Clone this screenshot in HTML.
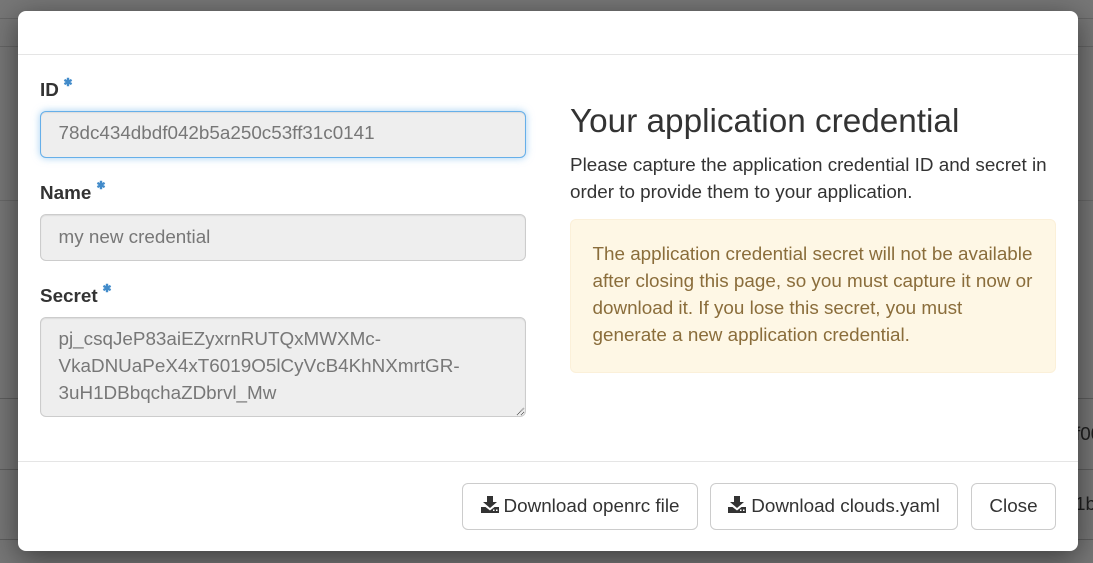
<!DOCTYPE html>
<html><head><meta charset="utf-8">
<style>
html,body{margin:0;padding:0;width:1093px;height:563px;overflow:hidden;background:#777;font-family:"Liberation Sans",sans-serif;font-size:18.85px;color:#333;}
.a{position:absolute;white-space:nowrap;}
.bgl{position:absolute;left:0;width:1093px;height:1px;background:#5e5e5e;}
.modal{position:absolute;left:18px;top:11px;width:1060px;height:540px;background:#fff;border-radius:8px;box-shadow:0 7px 30px rgba(0,0,0,.5);}
.hr{position:absolute;left:18px;width:1060px;height:1px;background:#e5e5e5;}
.lab{position:absolute;left:40px;font-weight:bold;line-height:27px;white-space:nowrap;}
.star{position:absolute;width:10px;height:10px;}
.inp{position:absolute;left:40px;width:486px;box-sizing:border-box;background:#eee;border:1px solid #ccc;border-radius:6px;color:#777;padding:7px 17.5px;line-height:27px;box-shadow:inset 0 1px 1px rgba(0,0,0,.075);white-space:nowrap;}
.btn{position:absolute;top:483px;height:47px;box-sizing:border-box;background:#fff;border:1px solid #ccc;border-radius:6px;line-height:43px;text-align:center;white-space:nowrap;}
.btn svg{vertical-align:-1px;margin-right:5px;}
</style></head>
<body>
<div class="bgl" style="top:18px;background:#666"></div>
<div class="bgl" style="top:46px;background:#666"></div>
<div class="bgl" style="top:200px;background:#696969"></div>
<div class="bgl" style="top:398px"></div>
<div class="bgl" style="top:469px"></div>
<div class="bgl" style="top:539px"></div>
<div class="a" style="left:1075px;top:420px;color:#1e1e1e;line-height:27px">f00</div>
<div class="a" style="left:1075px;top:490px;color:#1e1e1e;line-height:27px">1b</div>
<div class="modal"></div>
<div class="hr" style="top:54px"></div>
<div class="hr" style="top:461px"></div>

<div class="lab" style="top:76px">ID</div>
<svg class="star" style="left:63px;top:77px" viewBox="0 0 10 10"><path d="M5 .8v8.400M1.400 2.900l7.200 4.200M8.600 2.900l-7.200 4.200" stroke="#428bca" stroke-width="2.400" fill="none"/></svg>
<div class="inp" style="top:111px;height:47px;border-color:#66afe9;box-shadow:inset 0 1px 1px rgba(0,0,0,.075),0 0 8px rgba(102,175,233,.6)">78dc434dbdf042b5a250c53ff31c0141</div>

<div class="lab" style="top:179px">Name</div>
<svg class="star" style="left:96px;top:180px" viewBox="0 0 10 10"><path d="M5 .8v8.400M1.400 2.900l7.200 4.200M8.600 2.900l-7.200 4.200" stroke="#428bca" stroke-width="2.400" fill="none"/></svg>
<div class="inp" style="top:214px;height:47px;padding-top:8px">my new credential</div>

<div class="lab" style="top:282px">Secret</div>
<svg class="star" style="left:102px;top:283px" viewBox="0 0 10 10"><path d="M5 .8v8.400M1.400 2.900l7.200 4.200M8.600 2.900l-7.200 4.200" stroke="#428bca" stroke-width="2.400" fill="none"/></svg>
<div class="inp" style="top:317px;height:100px">pj_csqJeP83aiEZyxrnRUTQxMWXMc-<br>VkaDNUaPeX4xT6019O5lCyVcB4KhNXmrtGR-<br>3uH1DBbqchaZDbrvl_Mw
<svg style="position:absolute;right:0;bottom:0" width="9" height="9" viewBox="0 0 9 9"><path d="M1 8 8 1M5 8 8 5" stroke="#555" stroke-width="1" stroke-dasharray="1 .6" fill="none"/></svg>
</div>

<div class="a" style="left:570px;top:102px;font-size:33.3px;line-height:40px;color:#333">Your application credential</div>
<div class="a" style="left:570px;top:151px;line-height:27px">Please capture the application credential ID and secret in<br>order to provide them to your application.</div>
<div class="a" style="left:570px;top:219px;width:486px;height:154px;box-sizing:border-box;background:#fef7e5;border:1px solid #fbf0d9;border-radius:6px;color:#8a6d3b;padding:20px 21.5px;line-height:27px">The application credential secret will not be available<br>after closing this page, so you must capture it now or<br>download it. If you lose this secret, you must<br>generate a new application credential.</div>

<div class="btn" style="left:462px;width:236px"><svg width="18" height="17" viewBox="0 0 18 17"><path d="M6 0h6v6h4l-7 6-7-6h4z" fill="#333"/><path d="M0 11h4.500l4.500 3.500 4.500-3.500H18v6H0z" fill="#333"/><rect x="12" y="13.500" width="1.500" height="1.500" fill="#fff"/><rect x="15" y="13.500" width="1.500" height="1.500" fill="#fff"/></svg>Download openrc file</div>
<div class="btn" style="left:710px;width:248px"><svg width="18" height="17" viewBox="0 0 18 17"><path d="M6 0h6v6h4l-7 6-7-6h4z" fill="#333"/><path d="M0 11h4.500l4.500 3.500 4.500-3.500H18v6H0z" fill="#333"/><rect x="12" y="13.500" width="1.500" height="1.500" fill="#fff"/><rect x="15" y="13.500" width="1.500" height="1.500" fill="#fff"/></svg>Download clouds.yaml</div>
<div class="btn" style="left:971px;width:85px">Close</div>
</body></html>
